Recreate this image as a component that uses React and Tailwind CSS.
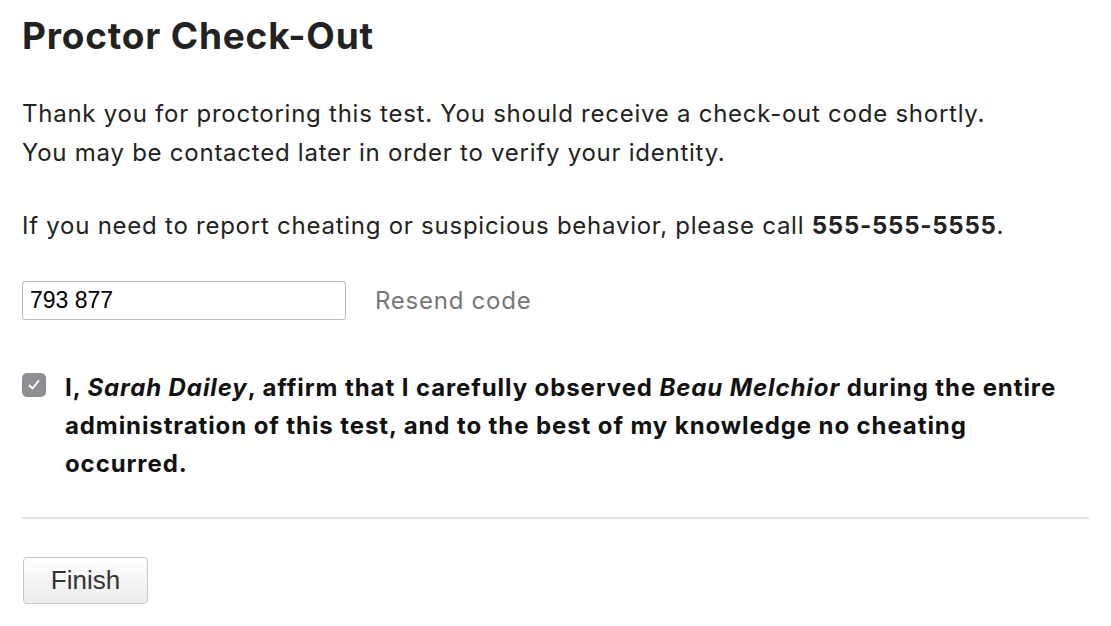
import { useState } from "react";

export default function App() {
  const [code, setCode] = useState("793 877");
  const [agreed, setAgreed] = useState(true);

  return (
    <div className="min-h-screen bg-white px-[22px] pt-[12px] text-[#222] font-['Inter',sans-serif]">
      {/* Title */}
      <h1 className="text-[37px] font-bold leading-[48px] tracking-[0.8px]">Proctor Check-Out</h1>

      {/* Intro */}
      <p className="mt-[34px] text-[24px] leading-[39px] tracking-[0.75px]">
        Thank you for proctoring this test. You should receive a check-out code shortly.
        <br />
        You may be contacted later in order to verify your identity.
      </p>

      <p className="mt-[34px] text-[24px] leading-[39px] tracking-[0.75px]">
        If you need to report cheating or suspicious behavior, please call{" "}
        <span className="font-bold">555-555-5555</span>.
      </p>

      {/* Code input */}
      <div className="mt-[36px] flex items-center gap-[29px]">
        <input
          value={code}
          onChange={(e) => setCode(e.target.value)}
          className="h-[39px] w-[324px] rounded-[3px] border border-[#bbb] px-[7px] text-[23px] text-black font-['Liberation_Sans',sans-serif] outline-none"
        />
        <button className="text-[24px] tracking-[0.75px] text-[#777]">Resend code</button>
      </div>

      {/* Affirmation */}
      <label className="mt-[49px] flex items-start gap-[19px]">
        <span
          onClick={() => setAgreed(!agreed)}
          className="mt-[4px] flex h-[24px] w-[24px] shrink-0 items-center justify-center rounded-[5px] bg-[#8e8e93]"
        >
          {agreed && (
            <svg width="14" height="14" viewBox="0 0 14 14" fill="none">
              <path d="M2.5 7.5 L5.5 10.5 L11.5 3" stroke="white" strokeWidth="2" strokeLinecap="round" strokeLinejoin="round" />
            </svg>
          )}
        </span>
        <span className="text-[24px] font-bold leading-[38px] tracking-[0.9px] text-[#111]">
          I, <i>Sarah Dailey</i>, affirm that I carefully observed <i>Beau Melchior</i> during the entire administration of this test, and to the best of my knowledge no cheating occurred.
        </span>
      </label>

      <hr className="mt-[34px] border-t-2 border-[#e2e2e2]" />

      {/* Finish */}
      <button className="mt-[38px] ml-[1px] h-[47px] w-[125px] rounded-[4px] border border-[#c8c8c8] bg-gradient-to-b from-white to-[#ececec] text-[26px] text-[#333] font-['Liberation_Sans',sans-serif]">
        Finish
      </button>
    </div>
  );
}
